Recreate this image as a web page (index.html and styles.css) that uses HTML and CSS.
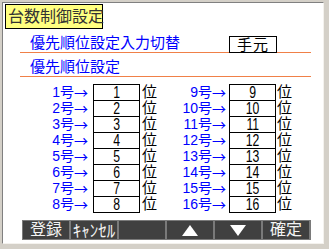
FILE: index.html
```html
<!DOCTYPE html>
<html lang="ja">
<head>
<meta charset="utf-8">
<link rel="stylesheet" href="styles.css">
</head>
<body>
<div class="panel">
  <div class="title">台数制御設定</div>
  <div class="setting">
    <span class="setting-label">優先順位設定入力切替</span>
    <span class="mode-box">手元</span>
  </div>
  <div class="setting">
    <span class="setting-label">優先順位設定</span>
  </div>
  <div class="order-grid">
    <span class="lbl l1">1号<span class="arr">→</span></span><span class="val"><span>1</span></span><span class="unit u1">位</span>
    <span class="lbl l2">9号<span class="arr">→</span></span><span class="val"><span>9</span></span><span class="unit u2">位</span>
    <span class="lbl l1">2号<span class="arr">→</span></span><span class="val"><span>2</span></span><span class="unit u1">位</span>
    <span class="lbl l2">10号<span class="arr">→</span></span><span class="val"><span>10</span></span><span class="unit u2">位</span>
    <span class="lbl l1">3号<span class="arr">→</span></span><span class="val"><span>3</span></span><span class="unit u1">位</span>
    <span class="lbl l2">11号<span class="arr">→</span></span><span class="val"><span>11</span></span><span class="unit u2">位</span>
    <span class="lbl l1">4号<span class="arr">→</span></span><span class="val"><span>4</span></span><span class="unit u1">位</span>
    <span class="lbl l2">12号<span class="arr">→</span></span><span class="val"><span>12</span></span><span class="unit u2">位</span>
    <span class="lbl l1">5号<span class="arr">→</span></span><span class="val"><span>5</span></span><span class="unit u1">位</span>
    <span class="lbl l2">13号<span class="arr">→</span></span><span class="val"><span>13</span></span><span class="unit u2">位</span>
    <span class="lbl l1">6号<span class="arr">→</span></span><span class="val"><span>6</span></span><span class="unit u1">位</span>
    <span class="lbl l2">14号<span class="arr">→</span></span><span class="val"><span>14</span></span><span class="unit u2">位</span>
    <span class="lbl l1">7号<span class="arr">→</span></span><span class="val"><span>7</span></span><span class="unit u1">位</span>
    <span class="lbl l2">15号<span class="arr">→</span></span><span class="val"><span>15</span></span><span class="unit u2">位</span>
    <span class="lbl l1">8号<span class="arr">→</span></span><span class="val last"><span>8</span></span><span class="unit u1">位</span>
    <span class="lbl l2">16号<span class="arr">→</span></span><span class="val last"><span>16</span></span><span class="unit u2">位</span>
  </div>
  <div class="toolbar">
    <div class="btn">登録</div>
    <div class="btn btn-kana">ｷｬﾝｾﾙ</div>
    <div class="btn"></div>
    <div class="btn"><svg width="16" height="11" viewBox="0 0 16 11"><polygon points="8,0 16,11 0,11" fill="#fff"/></svg></div>
    <div class="btn"><svg width="16" height="11" viewBox="0 0 16 11"><polygon points="0,0 16,0 8,11" fill="#fff"/></svg></div>
    <div class="btn">確定</div>
  </div>
</div>
</body>
</html>
```

FILE: styles.css
```css
html, body {
  margin: 0;
  padding: 0;
}
body {
  width: 329px;
  height: 249px;
  background: #d4d0c8;
  overflow: hidden;
  font-family: "Liberation Sans", "Noto Sans CJK JP", sans-serif;
}
.panel {
  box-sizing: border-box;
  margin: 2px 5px 5px 2px;
  width: 322px;
  height: 242px;
  background: #fff;
  border-top: 1px solid #808080;
  border-left: 1px solid #808080;
  border-right: 1px solid #f4f2ee;
  border-bottom: 1px solid #f4f2ee;
  display: flex;
  flex-direction: column;
}
.title {
  box-sizing: border-box;
  margin: 1px 0 0 2px;
  width: 98px;
  height: 25px;
  background: #ffff80;
  border: 1px solid #000;
  color: #333;
  font-size: 16px;
  line-height: 23px;
  padding-left: 2px;
  white-space: nowrap;
}
.setting {
  box-sizing: border-box;
  margin-left: 17px;
  width: 291px;
  height: 24px;
  border-bottom: 1px solid #f08048;
  display: flex;
  align-items: flex-end;
  padding-left: 10px;
}
.setting-label {
  color: #0000ff;
  font-size: 15px;
  line-height: 17px;
  padding-bottom: 1px;
  white-space: nowrap;
}
.mode-box {
  box-sizing: border-box;
  margin-left: auto;
  margin-right: 34px;
  margin-bottom: -1px;
  width: 48px;
  height: 17px;
  border: 1px solid #000;
  background: #fff;
  color: #000;
  font-size: 15px;
  line-height: 15px;
  text-align: center;
  letter-spacing: 1px;
}
.order-grid {
  margin-top: 7px;
  display: grid;
  grid-template-columns: 90px 47px 20px 69px 47px 1fr;
  grid-auto-rows: 16px;
}
.lbl {
  color: #0000ff;
  font-size: 14px;
  line-height: 14px;
  height: 16px;
  box-sizing: border-box;
  padding-top: 1px;
  text-align: right;
  white-space: nowrap;
}
.arr {
  display: inline-block;
  font-family: "Noto Sans CJK JP", sans-serif;
  font-size: 14px;
  line-height: 14px;
  height: 14px;
  vertical-align: top;
}
.l1 { padding-right: 5px; }
.l2 { padding-right: 3px; }
.val {
  box-sizing: border-box;
  height: 16px;
  border: 1px solid #000;
  border-bottom: none;
  background: #fff;
  display: flex;
  justify-content: center;
  align-items: center;
}
.val.last {
  height: 17px;
  border-bottom: 1px solid #000;
  padding-bottom: 1px;
}
.val span {
  display: block;
  font-family: "Liberation Sans", sans-serif;
  font-size: 17px;
  line-height: 14px;
  height: 14px;
  padding-top: 1px;
  color: #000;
  transform: scaleX(0.72);
}
.unit {
  color: #000;
  font-size: 15px;
  line-height: 15px;
  height: 16px;
  white-space: nowrap;
}
.u1 { padding-left: 2px; }
.u2 { padding-left: 1px; }
.toolbar {
  margin-top: 8px;
  margin-left: 19px;
  width: 289px;
  height: 20px;
  box-sizing: border-box;
  background: #7a7a7a;
  padding: 1px 1px;
  display: flex;
  gap: 2px;
}
.btn {
  width: 46px;
  flex: none;
  background: #404040;
  color: #f4f4f4;
  font-size: 16px;
  line-height: 18px;
  display: flex;
  align-items: center;
  justify-content: center;
  white-space: nowrap;
}
.btn-kana {
  font-family: "Noto Sans CJK JP", sans-serif;
  font-size: 17px;
  line-height: 18px;
}
```
